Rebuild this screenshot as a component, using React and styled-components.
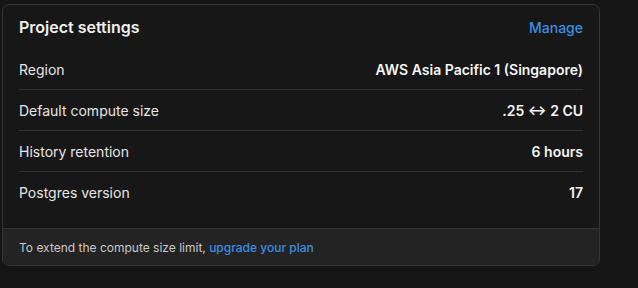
import React from 'react';
import styled, { createGlobalStyle } from 'styled-components';

const GlobalStyle = createGlobalStyle`
  html, body {
    margin: 0;
    padding: 0;
    background: #151515;
  }
  body {
    font-family: Inter, "Noto Sans", sans-serif;
    -webkit-font-smoothing: antialiased;
  }
`;

const rows = [
  { label: 'Region', value: 'AWS Asia Pacific 1 (Singapore)' },
  { label: 'Default compute size', value: '.25 ↔ 2 CU' },
  { label: 'History retention', value: '6 hours' },
  { label: 'Postgres version', value: '17' },
];

function App() {
  return (
    <>
      <GlobalStyle />
      <Page>
        <Card>
          <Header>
            <Title>Project settings</Title>
            <LinkText href="#">Manage</LinkText>
          </Header>
          <List>
            {rows.map((r) => (
              <Row key={r.label}>
                <Label>{r.label}</Label>
                <Value>{r.value}</Value>
              </Row>
            ))}
          </List>
          <Footer>
            <span>To extend the compute size limit,&nbsp;</span>
            <LinkText href="#" $small>upgrade your plan</LinkText>
          </Footer>
        </Card>
      </Page>
    </>
  );
}

const Page = styled.div`
  padding: 4px 0 0 2px;
`;

const Card = styled.div`
  width: 596px;
  border: 1px solid #353535;
  border-radius: 7px;
  background: #171717;
  overflow: hidden;
`;

const Header = styled.div`
  display: flex;
  align-items: center;
  justify-content: space-between;
  height: 44px;
  padding: 0 16px;
`;

const Title = styled.h3`
  margin: 0;
  font-size: 16px;
  font-weight: 600;
  color: #efefef;
`;

const LinkText = styled.a`
  color: #3b8fe3;
  text-decoration: none;
  font-size: ${(p) => (p.$small ? '12px' : '14px')};
  font-weight: 500;
`;

const List = styled.div`
  padding: 0 16px 16px;
`;

const Row = styled.div`
  display: flex;
  align-items: center;
  justify-content: space-between;
  height: 40px;
  border-bottom: 1px solid #333333;

  &:last-child {
    border-bottom: none;
    height: 40px;
  }
`;

const Label = styled.span`
  font-size: 14px;
  color: #e6e6e6;
`;

const Value = styled.span`
  font-size: 14px;
  font-weight: 600;
  color: #f5f5f5;
`;

const Footer = styled.div`
  display: flex;
  align-items: center;
  height: 36px;
  padding: 0 16px;
  border-top: 1px solid #353535;
  background: #232323;
  font-size: 12px;
  color: #c9c9c9;
`;

export default App;
